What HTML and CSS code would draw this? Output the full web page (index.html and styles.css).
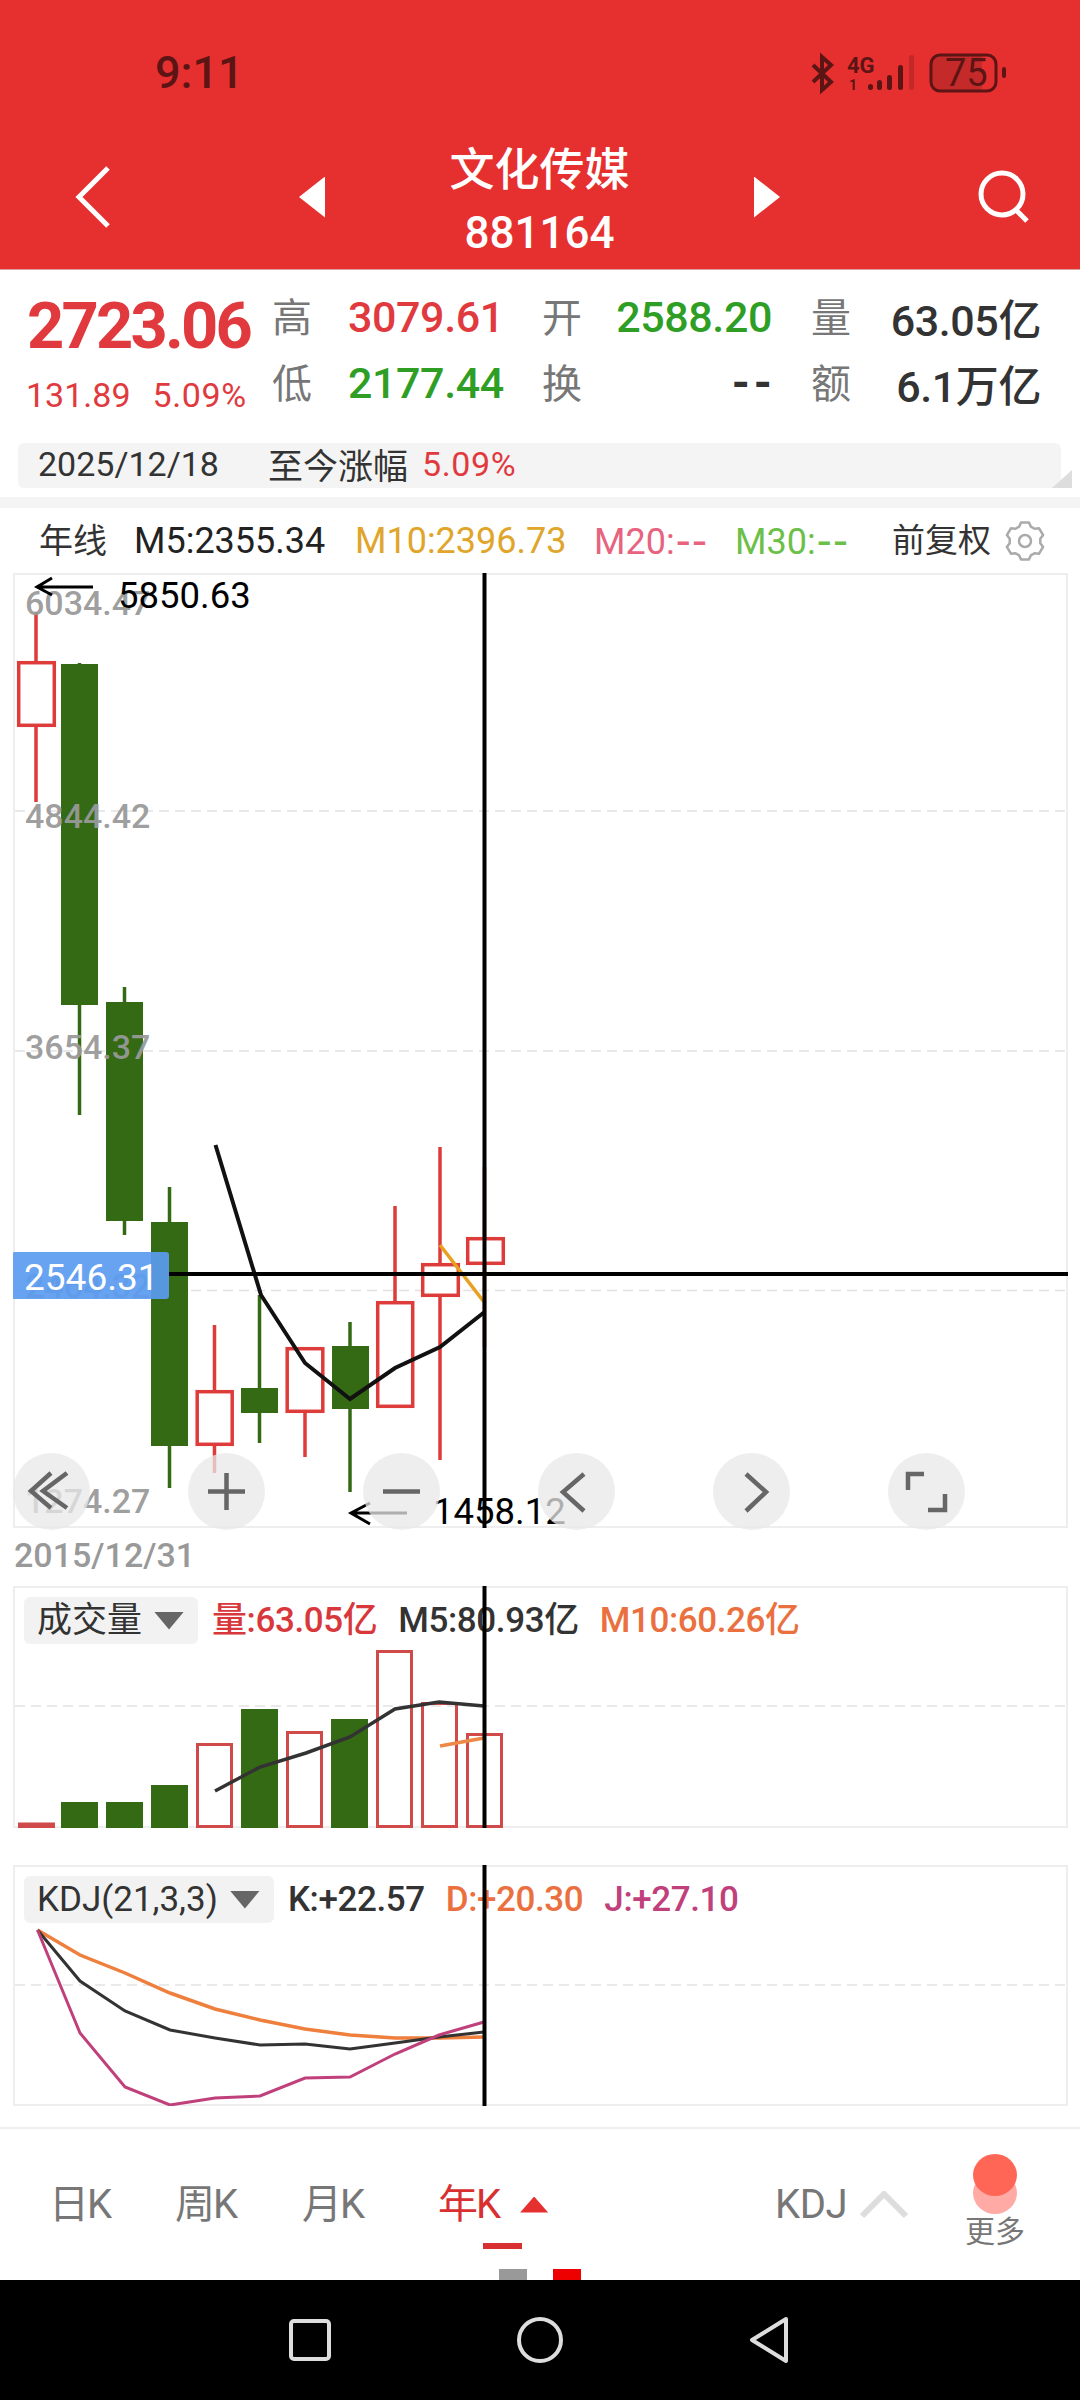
FILE: index.html
```html
<!DOCTYPE html>
<html lang="zh-CN">
<head>
    <meta charset="UTF-8">
    <title>文化传媒 881164</title>
    <link rel="stylesheet" href="styles.css">
</head>
<body>
    <!-- Red header -->
    <header class="header">
        <div class="status-bar">
            <span class="clock">9:11</span>
            <svg class="status-icons" width="205" height="46" viewBox="805 50 205 46">
                <path class="st-line" d="M813 65 L831 82 L822 90 V57 L831 65 L813 82"/>
                <text class="st-4g" x="847" y="73">4G</text>
                <text class="st-1" x="849" y="90">1</text>
                <rect class="st-bar" x="868" y="84" width="5" height="6" rx="2.5"/>
                <rect class="st-bar" x="877" y="80" width="5" height="10" rx="2.5"/>
                <rect class="st-bar" x="887" y="75" width="5" height="15" rx="2.5"/>
                <rect class="st-bar" x="898" y="65" width="5" height="25" rx="2.5"/>
                <rect class="st-bar-off" x="909" y="55" width="5" height="35" rx="2.5"/>
                <path class="st-fill" d="M937 56 H982 V90 H937 a6 6 0 0 1 -6 -6 V62 a6 6 0 0 1 6 -6 Z"/>
                <rect class="st-batt" x="931" y="55" width="65" height="36" rx="9"/>
                <text class="st-75" x="945" y="86">75</text>
                <rect class="st-bar" x="1002" y="67" width="4" height="11" rx="2"/>
            </svg>
        </div>
        <div class="nav">
            <svg class="nav-back" width="36" height="64" viewBox="0 0 36 64">
                <path d="M33 3 L4 32 L33 61"/>
            </svg>
            <div class="tri-left"></div>
            <div class="title">
                <div class="title-name">文化传媒</div>
                <div class="title-code">881164</div>
            </div>
            <div class="tri-right"></div>
            <svg class="nav-search" width="56" height="56" viewBox="0 0 56 56">
                <circle cx="25" cy="25" r="21"/>
                <path d="M39 41 L50 52"/>
            </svg>
        </div>
    </header>

    <!-- Quote block -->
    <section class="quote">
        <div class="quote-price">
            <div class="price">2723.06</div>
            <div class="price-sub"><span>131.89</span><span class="price-pct">5.09%</span></div>
        </div>
        <div class="quote-grid">
            <div class="stat first"><span class="stat-label">高</span><span class="stat-value red">3079.61</span></div>
            <div class="stat"><span class="stat-label">开</span><span class="stat-value green">2588.20</span></div>
            <div class="stat"><span class="stat-label">量</span><span class="stat-value">63.05亿</span></div>
            <div class="stat first"><span class="stat-label">低</span><span class="stat-value green">2177.44</span></div>
            <div class="stat"><span class="stat-label">换</span><span class="stat-value dash">--</span></div>
            <div class="stat"><span class="stat-label">额</span><span class="stat-value">6.1万亿</span></div>
        </div>
    </section>
    <div class="range-bar">
        <span class="range-date">2025/12/18</span>
        <span class="range-label">至今涨幅</span>
        <span class="range-value">5.09%</span>
        <div class="range-corner"></div>
    </div>
    <div class="divider"></div>

    <!-- Moving averages -->
    <div class="ma-row">
        <span class="ma-name">年线</span>
        <span class="ma-5">M5:2355.34</span>
        <span class="ma-10">M10:2396.73</span>
        <span class="ma-20">M20:<span class="ma-dash">--</span></span>
        <span class="ma-30">M30:<span class="ma-dash">--</span></span>
        <span class="ma-adj">前复权</span>
        <svg class="gear" width="40" height="40" viewBox="0 0 40 40">
            <path d="M14.2 5.6 L16.05 1.4 H23.95 L25.8 5.6 L29.5 7.8 L34.1 7.3 L38.1 14.1 L35.3 17.8 V22.2 L38.1 25.9 L34.1 32.7 L29.5 32.2 L25.8 34.4 L23.95 38.6 H16.05 L14.2 34.4 L10.5 32.2 L5.9 32.7 L1.9 25.9 L4.7 22.2 V17.8 L1.9 14.1 L5.9 7.3 L10.5 7.8 Z"/>
            <circle cx="20" cy="20" r="6"/>
        </svg>
    </div>

    <!-- Candle chart -->
    <div class="panel panel-main">
        <svg class="plot" width="1055" height="955" viewBox="13 573 1055 955">
            <path class="grid" d="M15 811 H1066 M15 1051 H1066 M15 1290.5 H1066"/>

            <path class="wick-up" d="M36 612 V802"/>
            <rect class="body-up" x="18.7" y="662.7" width="35.6" height="62.6"/>
            <path class="wick-down" d="M79.5 663 V1115"/>
            <rect class="body-down" x="61" y="664" width="37" height="341"/>
            <path class="wick-down" d="M124.5 987 V1235"/>
            <rect class="body-down" x="106" y="1002" width="37" height="219"/>
            <path class="wick-down" d="M169.5 1187 V1488"/>
            <rect class="body-down" x="151" y="1222" width="37" height="224"/>
            <path class="wick-up" d="M214.5 1325 V1473"/>
            <rect class="body-up" x="197.2" y="1391.7" width="35" height="52.6"/>
            <path class="wick-down" d="M259.5 1295 V1443"/>
            <rect class="body-down" x="241" y="1388" width="37" height="25"/>
            <path class="wick-up" d="M305 1347 V1457"/>
            <rect class="body-up" x="287.2" y="1348.7" width="35.6" height="62.6"/>
            <path class="wick-down" d="M350 1322 V1492"/>
            <rect class="body-down" x="332" y="1346" width="37" height="63"/>
            <path class="wick-up" d="M395 1206 V1301"/>
            <rect class="body-up" x="377.7" y="1302.7" width="35" height="103.6"/>
            <path class="wick-up" d="M440 1147 V1460"/>
            <rect class="body-up" x="422.7" y="1264.7" width="35.6" height="30.6"/>
            <path class="wick-up" d="M484.5 1167 V1347"/>
            <rect class="body-up" x="467.7" y="1238.7" width="35.6" height="24.6"/>

            <polyline class="ma-line-orange" points="440,1245 484,1302"/>
            <polyline class="ma-line-black" points="215.5,1145 261,1295 305,1363 350,1399 395,1368 440,1347 484.5,1312"/>

            <text class="axis" x="25" y="615">6034.47</text>
            <text class="axis" x="25" y="828">4844.42</text>
            <text class="axis" x="25" y="1059">3654.37</text>
            <text class="axis" x="25" y="1298">2464.32</text>
            <text class="axis" x="25" y="1513">1274.27</text>

            <path class="note-arrow" d="M93 587 H37 M52 578 L37 587 L52 595"/>
            <text class="note" x="118" y="608">5850.63</text>
            <path class="note-arrow" d="M407 1513 H351 M370 1503 L351 1513 L370 1524"/>
            <text class="note" x="433" y="1524">1458.12</text>

            <path class="cross" d="M484.5 573 V1528 M169 1274 H1068"/>
            <rect class="cross-tag" x="12" y="1252" width="157" height="47" rx="3"/>
            <text class="cross-text" x="24" y="1290">2546.31</text>
        </svg>
        <div class="chart-tools">
            <div class="tool">
                <svg width="77" height="77" viewBox="0 0 77 77"><path d="M38 20 L18 38 L38 55 M54 20 L30 38 L54 55"/></svg>
            </div>
            <div class="tool">
                <svg width="77" height="77" viewBox="0 0 77 77"><path d="M20 38.5 H57 M38.5 20 V57"/></svg>
            </div>
            <div class="tool">
                <svg width="77" height="77" viewBox="0 0 77 77"><path d="M20 38.5 H57"/></svg>
            </div>
            <div class="tool">
                <svg width="77" height="77" viewBox="0 0 77 77"><path d="M46 21 L25 39 L46 58"/></svg>
            </div>
            <div class="tool">
                <svg width="77" height="77" viewBox="0 0 77 77"><path d="M33 21 L53 39 L33 58"/></svg>
            </div>
            <div class="tool">
                <svg width="77" height="77" viewBox="0 0 77 77"><path d="M20 37 V21 H36 M40 57 H57 V41"/></svg>
            </div>
        </div>
    </div>
    <div class="chart-date">2015/12/31</div>

    <!-- Volume -->
    <div class="panel panel-vol">
        <div class="panel-head">
            <div class="picker">成交量<span class="caret"></span></div>
            <span class="red-soft">量:63.05亿</span>
            <span class="dark">M5:80.93亿</span>
            <span class="orange">M10:60.26亿</span>
        </div>
        <svg class="plot" width="1055" height="242" viewBox="13 1586 1055 242">
            <path class="grid" d="M15 1706 H1066"/>
            <rect class="vol-up" x="19.5" y="1824" width="34" height="3"/>
            <rect class="vol-down" x="61" y="1802" width="37" height="26"/>
            <rect class="vol-down" x="106" y="1802" width="37" height="26"/>
            <rect class="vol-down" x="151" y="1785" width="37" height="43"/>
            <rect class="vol-up" x="197.5" y="1744.5" width="34" height="82"/>
            <rect class="vol-down" x="241" y="1709" width="37" height="119"/>
            <rect class="vol-up" x="287.5" y="1732.5" width="34" height="94"/>
            <rect class="vol-down" x="331" y="1719" width="37" height="109"/>
            <rect class="vol-up" x="377.5" y="1651.5" width="34" height="175"/>
            <rect class="vol-up" x="422.5" y="1703.5" width="34" height="123"/>
            <rect class="vol-up" x="467.5" y="1734.5" width="34" height="92"/>
            <polyline class="vol-ma-black" points="215,1791 260,1767 306,1753 350,1737 395,1709 439,1702 484,1706"/>
            <polyline class="vol-ma-orange" points="440,1746 484,1738"/>
            <path class="cross" d="M484.5 1586 V1828"/>
        </svg>
    </div>

    <!-- KDJ -->
    <div class="panel panel-kdj">
        <div class="panel-head">
            <div class="picker">KDJ(21,3,3)<span class="caret"></span></div>
            <span class="dark">K:+22.57</span>
            <span class="orange">D:+20.30</span>
            <span class="pink">J:+27.10</span>
        </div>
        <svg class="plot" width="1055" height="241" viewBox="13 1865 1055 241">
            <path class="grid" d="M15 1985 H1066"/>
            <polyline class="kdj-d" points="37.5,1930 80,1955 125,1973 170,1993 215,2009 260,2020 305,2029 350,2035 395,2038 439,2038 484,2037"/>
            <polyline class="kdj-k" points="37.5,1930 80,1981 125,2011 170,2030 215,2038 260,2045 305,2044 350,2049 395,2043 439,2037 484,2032"/>
            <polyline class="kdj-j" points="37.5,1930 80,2033 125,2087 170,2105 215,2098 260,2096 305,2078 350,2077 395,2054 439,2035 484,2022"/>
            <path class="cross" d="M484.5 1865 V2106"/>
        </svg>
    </div>

    <!-- Period tabs -->
    <div class="tabs">
        <span class="tab tab-day">日K</span>
        <span class="tab tab-week">周K</span>
        <span class="tab tab-month">月K</span>
        <span class="tab tab-active">年K<span class="tab-arrow"></span><span class="tab-line"></span></span>
        <span class="tab tab-kdj">KDJ</span>
        <svg class="tab-chevron" width="50" height="28" viewBox="0 0 50 28"><path d="M3 25 L25 3 L47 25"/></svg>
        <div class="more">
            <svg width="44" height="60" viewBox="0 0 44 60">
                <ellipse class="more-back" cx="22" cy="39" rx="22" ry="21"/>
                <ellipse class="more-front" cx="22" cy="21" rx="22" ry="21"/>
            </svg>
            <span>更多</span>
        </div>
        <div class="pager"><span class="pager-gray"></span><span class="pager-red"></span></div>
    </div>

    <!-- Android nav -->
    <div class="system-nav">
        <svg width="44" height="44" viewBox="0 0 44 44"><rect x="3" y="3" width="38" height="38" rx="3"/></svg>
        <svg width="48" height="48" viewBox="0 0 48 48"><circle cx="24" cy="24" r="21"/></svg>
        <svg width="42" height="48" viewBox="0 0 42 48"><path d="M38 3 L4 24 L38 45 Z"/></svg>
    </div>
</body>
</html>
```

FILE: styles.css
```css
* {
    box-sizing: border-box;
}

body {
    margin: 0;
    width: 1080px;
    height: 2400px;
    overflow: hidden;
    background: #fff;
    font-family: Roboto, "Noto Sans CJK SC", sans-serif;
    color: #333;
}

svg {
    display: block;
}

/* header */
.header {
    height: 270px;
    background: #e63030;
    border-bottom: 1px solid #d9a0a0;
}

.status-bar {
    height: 125px;
    display: flex;
    justify-content: space-between;
    padding: 50px 70px 0 155px;
}

.clock {
    font-size: 45px;
    font-weight: 500;
    line-height: 46px;
    color: #5c1414;
}

.status-icons {
    flex-shrink: 0;
}

.st-line {
    fill: none;
    stroke: #5c1414;
    stroke-width: 4;
}

.st-4g {
    font-size: 22px;
    font-weight: 700;
    fill: #5c1414;
}

.st-1 {
    font-size: 14px;
    font-weight: 700;
    fill: #5c1414;
}

.st-bar {
    fill: #5c1414;
}

.st-bar-off {
    fill: #5c1414;
    opacity: 0.25;
}

.st-fill {
    fill: #c42a2a;
}

.st-batt {
    fill: none;
    stroke: #5c1414;
    stroke-width: 3;
}

.st-75 {
    font-size: 38px;
    fill: #5c1414;
}

.nav {
    height: 144px;
    display: flex;
    align-items: center;
}

.nav-back {
    margin-left: 75px;
    flex-shrink: 0;
    fill: none;
    stroke: #fff;
    stroke-width: 5;
}

.tri-left,
.tri-right {
    flex-shrink: 0;
    width: 26px;
    height: 41px;
    background: #fff;
}

.tri-left {
    margin-left: 188px;
    clip-path: polygon(100% 0, 0 50%, 100% 100%);
}

.tri-right {
    clip-path: polygon(0 0, 100% 50%, 0 100%);
}

.title {
    flex: none;
    width: 429px;
    align-self: flex-start;
    padding-top: 15px;
    text-align: center;
    color: #fff;
}

.title-name {
    font-size: 45px;
    font-weight: 500;
    line-height: 62px;
}

.title-code {
    font-size: 44px;
    font-weight: 500;
    line-height: 62px;
}

.nav-search {
    flex-shrink: 0;
    margin-left: 197px;
    fill: none;
    stroke: #fff;
    stroke-width: 5;
}

/* quote */
.quote {
    display: flex;
    height: 173px;
    padding-top: 14px;
}

.quote-price {
    width: 272px;
    padding-left: 26px;
    color: #e03a3e;
}

.price {
    padding-left: 1px;
    font-size: 65px;
    font-weight: 700;
    line-height: 84px;
    letter-spacing: -2.8px;
}

.price-sub {
    display: flex;
    gap: 22px;
    font-size: 34px;
    line-height: 54px;
}

.price-pct {
    letter-spacing: 0.6px;
}

.quote-grid {
    display: grid;
    grid-template-columns: 231px 230px 230px;
    grid-auto-rows: 66px;
    column-gap: 39px;
}

.stat {
    display: flex;
    justify-content: space-between;
    align-items: center;
}

.stat.first {
    justify-content: flex-start;
    gap: 36px;
}

.stat-label {
    margin-top: -4px;
    font-size: 40px;
    color: #777;
}

.stat-value {
    font-size: 43px;
    font-weight: 500;
    letter-spacing: -0.4px;
    color: #333;
}

.stat-value.dash {
    margin-right: -4px;
    font-size: 46px;
    font-weight: 700;
    letter-spacing: 4px;
}

.red {
    color: #e03a3e;
}

.green {
    color: #2e9e24;
}

.range-bar {
    position: relative;
    display: flex;
    align-items: center;
    height: 45px;
    margin-left: 18px;
    width: 1043px;
    padding: 0 0 4px 20px;
    background: #f4f4f4;
    border-radius: 6px;
    font-size: 34px;
}

.range-label {
    margin-left: 49px;
    font-size: 35px;
}

.range-value {
    margin-left: 14px;
    letter-spacing: 0.6px;
    color: #e03a3e;
}

.range-corner {
    position: absolute;
    right: -11px;
    bottom: 0;
    width: 20px;
    height: 18px;
    background: #ddd;
    clip-path: polygon(100% 0, 100% 100%, 0 100%);
}

.divider {
    height: 11px;
    margin-top: 9px;
    background: #f4f4f4;
}

/* moving averages */
.ma-row {
    display: flex;
    align-items: center;
    height: 65px;
    padding-left: 39px;
    font-size: 36px;
    line-height: 44px;
}

.ma-name {
    width: 95px;
    font-size: 34px;
}

.ma-5 {
    width: 221px;
    color: #222;
}

.ma-10 {
    width: 239px;
    color: #e0a52a;
}

.ma-20 {
    width: 141px;
    color: #e8637f;
}

.ma-30 {
    width: 157px;
    color: #6cc04a;
}

.ma-dash {
    margin-left: 2px;
    font-size: 47px;
    line-height: 1;
    letter-spacing: 3.5px;
    vertical-align: -3px;
}

.ma-adj {
    width: 113px;
    font-size: 33px;
}

.gear {
    fill: none;
    stroke: #aaa;
    stroke-width: 2.5;
    stroke-linejoin: round;
}

/* chart panels */
.panel {
    position: relative;
    width: 1055px;
    margin-left: 13px;
    box-shadow: inset 0 0 0 2px #eee;
}

.panel-main {
    height: 955px;
}

.panel-vol {
    height: 242px;
}

.panel-kdj {
    height: 241px;
    margin-top: 37px;
}

.plot {
    position: relative;
}

.grid {
    fill: none;
    stroke: #e2e2e2;
    stroke-width: 1.5;
    stroke-dasharray: 10 6;
}

.wick-up {
    fill: none;
    stroke: #de3b3b;
    stroke-width: 3.5;
}

.wick-down {
    fill: none;
    stroke: #346a14;
    stroke-width: 3.5;
}

.body-up {
    fill: #fff;
    stroke: #de3b3b;
    stroke-width: 3.5;
}

.body-down {
    fill: #346a14;
}

.ma-line-black {
    fill: none;
    stroke: #111;
    stroke-width: 4;
}

.ma-line-orange {
    fill: none;
    stroke: #e8a020;
    stroke-width: 3.5;
}

.axis {
    font-size: 34px;
    font-weight: 500;
    fill: #999;
    fill-opacity: 0.95;
}

.note {
    font-size: 36.5px;
    fill: #000;
}

.note-arrow {
    fill: none;
    stroke: #000;
    stroke-width: 3;
}

.cross {
    fill: none;
    stroke: #000;
    stroke-width: 4;
}

.cross-tag {
    fill: #5a9bf0;
    fill-opacity: 0.92;
}

.cross-text {
    font-size: 37px;
    fill: #fff;
}

.chart-tools {
    position: absolute;
    left: 0;
    bottom: -2px;
    display: flex;
    gap: 98px;
}

.tool {
    width: 77px;
    height: 77px;
    border-radius: 50%;
    background: rgba(232, 232, 232, 0.75);
}

.tool svg {
    fill: none;
    stroke: #666;
    stroke-width: 4.5;
}

.chart-date {
    height: 58px;
    padding: 5px 0 0 14px;
    font-size: 34px;
    font-weight: 500;
    line-height: 44px;
    color: #999;
}

.panel-head {
    position: absolute;
    top: 11px;
    left: 11px;
    display: flex;
    align-items: center;
    gap: 21px;
    font-size: 35px;
    font-weight: 500;
    line-height: 47px;
    letter-spacing: -0.4px;
}

.picker {
    display: flex;
    align-items: center;
    gap: 12px;
    height: 47px;
    margin-right: -7px;
    padding: 0 14px 0 13px;
    background: #f2f2f2;
    border-radius: 6px;
    font-weight: 400;
    letter-spacing: 0;
    color: #333;
}

.caret {
    width: 30px;
    height: 18px;
    background: #666;
    clip-path: polygon(0 0, 100% 0, 50% 100%);
}

.red-soft {
    color: #d8383c;
}

.dark {
    color: #333;
}

.orange {
    color: #eb7040;
}

.pink {
    color: #c0407c;
}

.vol-up {
    fill: none;
    stroke: #d04a4a;
    stroke-width: 3;
}

.vol-down {
    fill: #346a14;
}

.vol-ma-black {
    fill: none;
    stroke: #333;
    stroke-width: 3.5;
}

.vol-ma-orange {
    fill: none;
    stroke: #ee8844;
    stroke-width: 3.5;
}

.kdj-d {
    fill: none;
    stroke: #ee7f3c;
    stroke-width: 3.5;
}

.kdj-k {
    fill: none;
    stroke: #333;
    stroke-width: 3;
}

.kdj-j {
    fill: none;
    stroke: #c0407c;
    stroke-width: 3;
}

/* tabs */
.tabs {
    position: relative;
    display: flex;
    align-items: center;
    height: 153px;
    margin-top: 21px;
    padding: 0 55px 0 49px;
    border-top: 2px solid #eee;
    font-size: 40px;
    line-height: 44px;
    letter-spacing: -2px;
    color: #777;
}

.tab {
    position: relative;
    white-space: nowrap;
}

.tab-day {
    width: 126px;
}

.tab-week {
    width: 127px;
}

.tab-month {
    width: 136px;
}

.tab-active {
    display: flex;
    align-items: center;
    color: #d83030;
}

.tab-arrow {
    width: 28px;
    height: 16px;
    margin-left: 21px;
    background: #e63030;
    clip-path: polygon(50% 0, 100% 100%, 0 100%);
}

.tab-line {
    position: absolute;
    left: 45px;
    bottom: -22px;
    width: 39px;
    height: 6px;
    background: #d83030;
}

.tab-kdj {
    margin-left: auto;
    letter-spacing: -0.5px;
}

.tab-chevron {
    margin: 0 56px 0 12px;
    fill: none;
    stroke: #ddd;
    stroke-width: 6;
}

.more {
    display: flex;
    flex-direction: column;
    align-items: center;
    margin-bottom: 6px;
    font-size: 30px;
    line-height: 36px;
    letter-spacing: 0;
}

.more-front {
    fill: #ff6655;
}

.more-back {
    fill: #ffaaa5;
}

.pager {
    position: absolute;
    left: 499px;
    bottom: 0;
    display: flex;
    gap: 26px;
}

.pager-gray,
.pager-red {
    width: 28px;
    height: 11px;
}

.pager-gray {
    background: #999;
}

.pager-red {
    background: #e00;
}

/* android nav */
.system-nav {
    display: flex;
    align-items: center;
    justify-content: center;
    gap: 184px;
    height: 120px;
    padding-right: 3px;
    background: #000;
}

.system-nav svg {
    fill: none;
    stroke: #ddd;
    stroke-width: 4;
    stroke-linejoin: round;
}
```
